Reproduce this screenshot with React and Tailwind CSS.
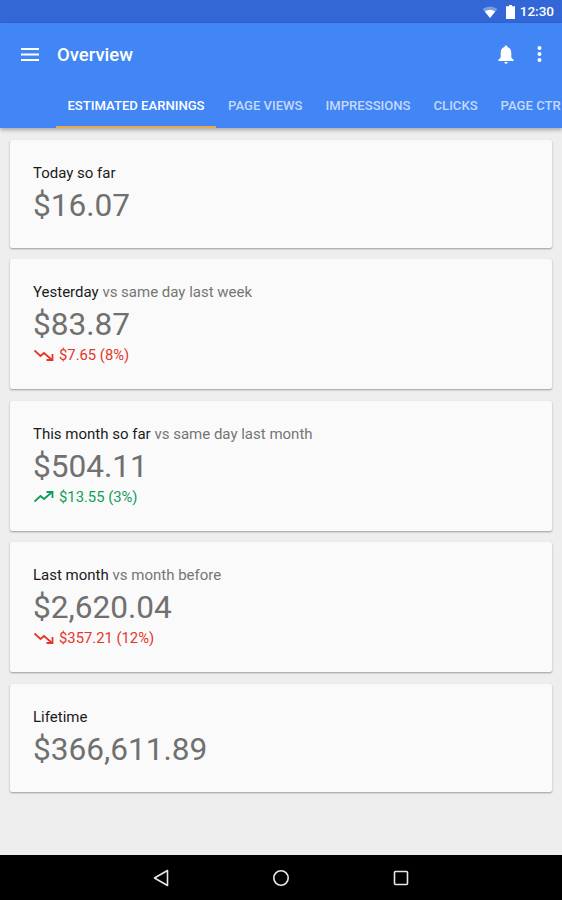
import React from "react";

function Card({ title, sub, value, delta, dir }) {
  const up = dir === "up";
  return (
    <div className={`rounded-[2px] bg-[#fafafa] shadow-[0_1px_2px_rgba(0,0,0,0.35)] px-[23px] ${delta ? "h-[130px]" : "h-[108px]"} pt-[23px]`}>
      <div className="text-[15px] leading-[20px] text-[#1a1a1a]">
        {title}
        {sub && <span className="text-[#757575]"> {sub}</span>}
      </div>
      <div className="text-[31.6px] leading-[42px] mt-[2px] text-[#707070]">{value}</div>
      {delta && (
        <div className={`flex items-center h-[20px] -mt-[1px] text-[14.8px] ${up ? "text-[#0f9d58]" : "text-[#e53529]"}`}>
          <svg width="20" height="12" viewBox="0 0 20 12" fill="none" stroke="currentColor" strokeWidth="1.8" className="mr-[5px] ml-[1px]">
            {up ? (
              <>
                <path d="M0.5 10.5 L6.5 5 L10 8 L17.5 1.5" />
                <path d="M12.5 1 H18.5 V7" />
              </>
            ) : (
              <>
                <path d="M0.5 1.5 L6.5 7 L10 4 L17.5 10.5" />
                <path d="M12.5 11 H18.5 V5" />
              </>
            )}
          </svg>
          <span>{delta}</span>
        </div>
      )}
    </div>
  );
}

export default function App() {
  return (
    <div className="w-[562px] h-[900px] flex flex-col overflow-hidden bg-[#eeeeee] font-['Roboto',sans-serif]">
      <div className="h-[23px] bg-[#3367d6] flex items-center justify-end pr-[8px] text-white text-[13.5px] font-medium">
        <svg width="16" height="12" viewBox="0 0 16 12" className="mr-[8px]">
          <path d="M0.5 3 Q8 -2 15.5 3 L8 12 Z" fill="#ffffff" fillOpacity="0.35" />
          <path d="M2.8 5.6 Q8 2 13.2 5.6 L8 12 Z" fill="#ffffff" />
        </svg>
        <svg width="9" height="14" viewBox="0 0 9 14" className="mr-[5px]">
          <path d="M3 0 H6 V1.2 H9 V14 H0 V1.2 H3 Z" fill="#ffffff" />
        </svg>
        <span className="leading-none">12:30</span>
      </div>
      <div className="h-[105px] bg-[#4285f4] shadow-[0_2px_4px_rgba(0,0,0,0.3)] relative flex flex-col shrink-0">
        <div className="h-[62px] flex items-center pl-[21px] pr-[20px] text-white">
          <svg width="18" height="13" viewBox="0 0 18 13" fill="#ffffff" className="mr-[18px]">
            <rect y="0" width="18" height="2" />
            <rect y="5.5" width="18" height="2" />
            <rect y="11" width="18" height="2" />
          </svg>
          <span className="text-[18.5px] font-medium mt-[3px]">Overview</span>
          <svg width="16" height="19" viewBox="0 0 16 19" fill="#ffffff" className="ml-auto mr-[23px]">
            <path d="M8 0.5 A1.4 1.4 0 0 1 9.4 2 C12 2.7 13.3 5 13.3 7.5 V12.5 L15.7 15 V16 H0.3 V15 L2.7 12.5 V7.5 C2.7 5 4 2.7 6.6 2 A1.4 1.4 0 0 1 8 0.5 Z" />
            <path d="M6.3 17 H9.7 A1.7 1.7 0 0 1 6.3 17 Z" />
          </svg>
          <svg width="5" height="16" viewBox="0 0 5 16" fill="#ffffff">
            <circle cx="2.5" cy="2" r="2" />
            <circle cx="2.5" cy="8" r="2" />
            <circle cx="2.5" cy="14" r="2" />
          </svg>
        </div>
        <div className="flex-1 flex pl-[56px] text-[13.1px] font-medium whitespace-nowrap">
          <div className="w-[160px] flex items-center justify-center text-white border-b-[2px] border-[#e8ab52]">
            ESTIMATED EARNINGS
          </div>
          <div className="flex items-center ml-[12px] gap-[23px] pb-[2px] text-white/70">
            <span>PAGE VIEWS</span>
            <span>IMPRESSIONS</span>
            <span>CLICKS</span>
            <span>PAGE CTR</span>
          </div>
        </div>
      </div>
      <div className="flex-1 flex flex-col gap-[11.4px] pt-[12px] px-[10px]">
        <Card title="Today so far" value="$16.07" />
        <Card title="Yesterday" sub="vs same day last week" value="$83.87" delta="$7.65 (8%)" dir="down" />
        <Card title="This month so far" sub="vs same day last month" value="$504.11" delta="$13.55 (3%)" dir="up" />
        <Card title="Last month" sub="vs month before" value="$2,620.04" delta="$357.21 (12%)" dir="down" />
        <Card title="Lifetime" value="$366,611.89" />
      </div>
      <div className="h-[45px] bg-black flex items-center shrink-0 relative">
        <div className="flex w-full justify-center gap-[102px] pr-[1px]">
          <svg width="18" height="18" viewBox="0 0 18 18" fill="none" stroke="#e8e8e8" strokeWidth="1.6">
            <path d="M15.5 1.5 V16.5 L2.5 9 Z" strokeLinejoin="round" />
          </svg>
          <svg width="18" height="18" viewBox="0 0 18 18" fill="none" stroke="#e8e8e8" strokeWidth="1.6">
            <circle cx="9" cy="9" r="7.2" />
          </svg>
          <svg width="18" height="18" viewBox="0 0 18 18" fill="none" stroke="#e8e8e8" strokeWidth="1.6">
            <rect x="2.5" y="2.5" width="13" height="13" rx="1" />
          </svg>
        </div>
      </div>
    </div>
  );
}
